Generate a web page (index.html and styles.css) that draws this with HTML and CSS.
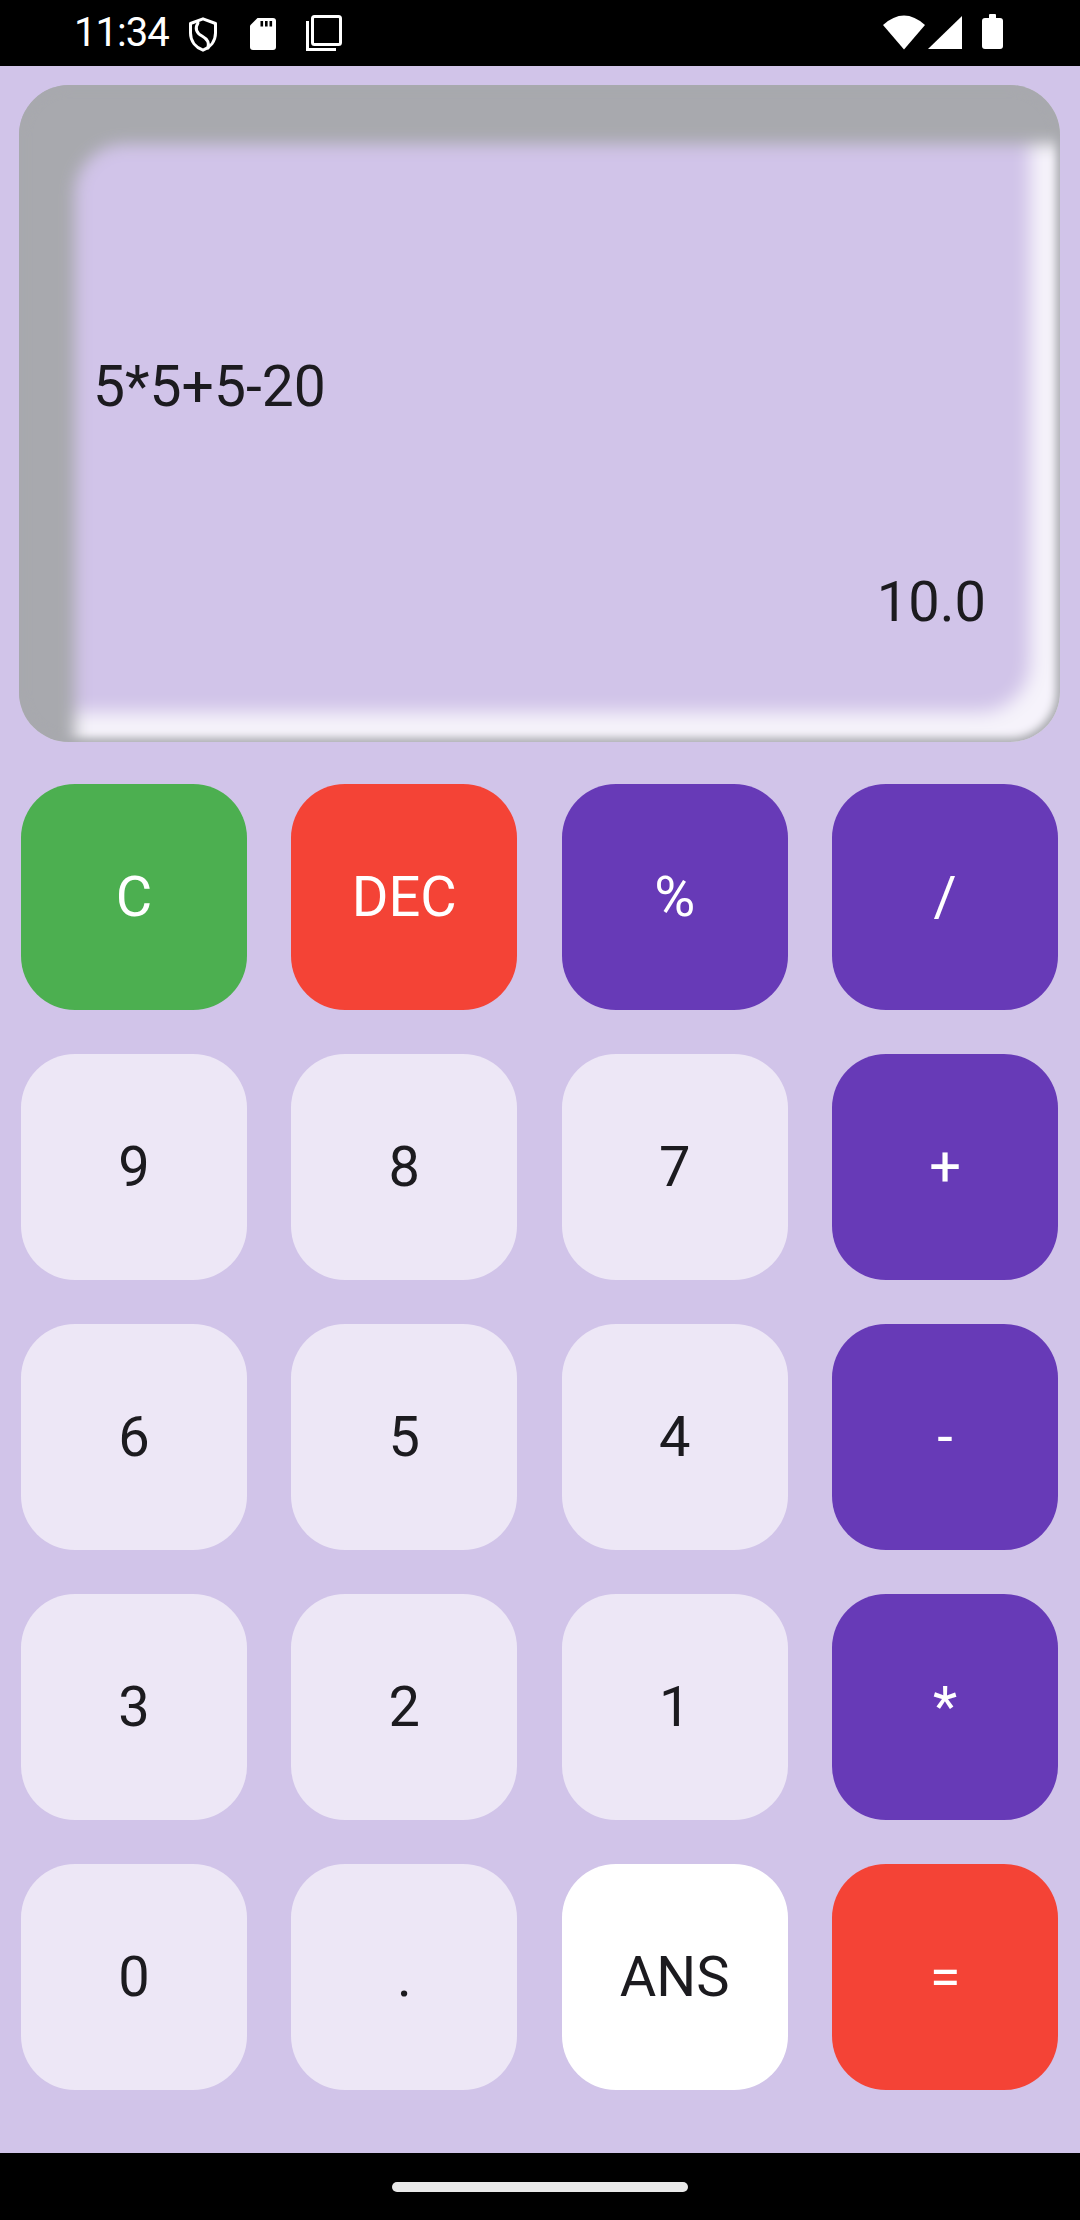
FILE: index.html
```html
<!DOCTYPE html>
<html lang="en">
<head>
<meta charset="utf-8">
<title>Calculator</title>
<link rel="stylesheet" href="styles.css">
</head>
<body>
<header class="status">
  <div class="status-left">
    <span class="time">11:34</span>
    <svg class="ic-shield" width="30" height="35" viewBox="0 0 30 35"><path d="M15 1.8 L27.5 6.5 V16 C27.5 24.5 22 30.5 15 33.2 C8 30.5 2.5 24.5 2.5 16 V6.5 Z" fill="none" stroke="#fff" stroke-width="3" stroke-linejoin="round"/><path d="M10 6 C6.5 11.5 8.5 16 14 19 C19.5 22 21.5 26 20 31" fill="none" stroke="#fff" stroke-width="3" stroke-linecap="round"/></svg>
    <svg class="ic-sd" width="26" height="32" viewBox="0 0 26 32"><path d="M7.5 0 H23 A3 3 0 0 1 26 3 V29 A3 3 0 0 1 23 32 H3 A3 3 0 0 1 0 29 V7.5 Z" fill="#fff"/><rect x="10.5" y="3" width="2.6" height="5.5" fill="#000"/><rect x="15" y="3" width="2.6" height="5.5" fill="#000"/><rect x="19.5" y="3" width="2.6" height="5.5" fill="#000"/></svg>
    <svg class="ic-copy" width="36" height="36" viewBox="0 0 36 36"><rect x="6.5" y="1.5" width="28" height="28" rx="2" fill="none" stroke="#fff" stroke-width="3"/><path d="M1.5 6 V34.5 H30" fill="none" stroke="#fff" stroke-width="3"/></svg>
  </div>
  <div class="status-right">
    <svg class="ic-wifi" width="42" height="35" viewBox="0 0 42 35"><path d="M0 10 Q21 -9 42 10 L21 34.5 Z" fill="#fff"/></svg>
    <svg class="ic-signal" width="34" height="33" viewBox="0 0 34 33"><path d="M0 33 L34 0 V33 Z" fill="#fff"/></svg>
    <svg class="ic-battery" width="21" height="35" viewBox="0 0 21 35"><rect x="7" y="0" width="7" height="5" rx="1" fill="#fff"/><rect x="0" y="4" width="21" height="31" rx="3" fill="#fff"/></svg>
  </div>
</header>

<main class="app">
  <section class="display">
    <div class="expr">5*5+5-20</div>
    <div class="result">10.0</div>
  </section>

  <div class="keys">
    <button class="key key-green">C</button>
    <button class="key key-red">DEC</button>
    <button class="key key-purple">%</button>
    <button class="key key-purple">/</button>

    <button class="key">9</button>
    <button class="key">8</button>
    <button class="key">7</button>
    <button class="key key-purple">+</button>

    <button class="key">6</button>
    <button class="key">5</button>
    <button class="key">4</button>
    <button class="key key-purple">-</button>

    <button class="key">3</button>
    <button class="key">2</button>
    <button class="key">1</button>
    <button class="key key-purple">*</button>

    <button class="key">0</button>
    <button class="key">.</button>
    <button class="key key-white">ANS</button>
    <button class="key key-red">=</button>
  </div>
</main>

<footer class="navbar"><span class="pill"></span></footer>
</body>
</html>
```

FILE: styles.css
```css
* { box-sizing: border-box; }

html, body {
  margin: 0;
  padding: 0;
}

body {
  width: 1080px;
  height: 2220px;
  display: flex;
  flex-direction: column;
  background: #D1C4E9;
  font-family: Roboto, "Noto Sans", "Liberation Sans", sans-serif;
  overflow: hidden;
}

/* status bar */
.status {
  height: 66px;
  flex: 0 0 66px;
  background: #000;
  color: #fff;
  display: flex;
  align-items: center;
  justify-content: space-between;
  padding: 0 77px 0 74px;
}

.status-left, .status-right {
  display: flex;
  align-items: center;
}

.time {
  font-size: 40px;
  line-height: 66px;
  letter-spacing: -1px;
  margin-right: 19px;
}

.ic-shield { margin-top: 3px; margin-right: 32px; }
.ic-sd { margin-top: 2px; margin-right: 30px; }
.ic-copy { margin-top: 0; }

.ic-wifi { margin-top: -1px; margin-right: 3px; }
.ic-signal { margin-top: -1px; margin-right: 20px; }
.ic-battery { margin-top: -3px; }

/* app */
.app {
  flex: 1;
  padding-top: 19px;
  display: flex;
  flex-direction: column;
}

.display {
  height: 657px;
  margin: 0 20px 0 19px;
  border-radius: 50px;
  background: #D1C4E9;
  box-shadow:
    inset 0 0 8px 4px #a8a9ae,
    inset 56px 59px 16px 0 #a8a9ae,
    inset -30px -30px 18px 0 rgba(255, 255, 255, 0.8);
  padding: 270px 74px 0 74px;
  color: #1c1b1f;
  line-height: 64px;
}

.expr {
  height: 64px;
  font-size: 57px;
}

.result {
  margin-top: 151px;
  height: 64px;
  font-size: 56px;
  text-align: right;
}

/* keypad */
.keys {
  margin: 42px 22px 0 21px;
  display: grid;
  grid-template-columns: repeat(4, 1fr);
  grid-auto-rows: 226px;
  column-gap: 44.6px;
  row-gap: 44px;
}

.key {
  border: none;
  margin: 0;
  padding: 0;
  border-radius: 54px;
  background: #EDE7F6;
  color: #1c1b1f;
  font-family: Roboto, "Noto Sans", "Liberation Sans", sans-serif;
  font-size: 56px;
  display: flex;
  align-items: center;
  justify-content: center;
}

.key-green { background: #4CAF50; color: #fff; }
.key-red { background: #F44336; color: #fff; }
.key-purple { background: #673AB7; color: #fff; }
.key-white { background: #ffffff; color: #1c1b1f; }

/* nav bar */
.navbar {
  flex: 0 0 67px;
  height: 67px;
  background: #000;
  display: flex;
  align-items: center;
  justify-content: center;
}

.pill {
  width: 296px;
  height: 10px;
  border-radius: 5px;
  background: #e8e8e8;
}
```
